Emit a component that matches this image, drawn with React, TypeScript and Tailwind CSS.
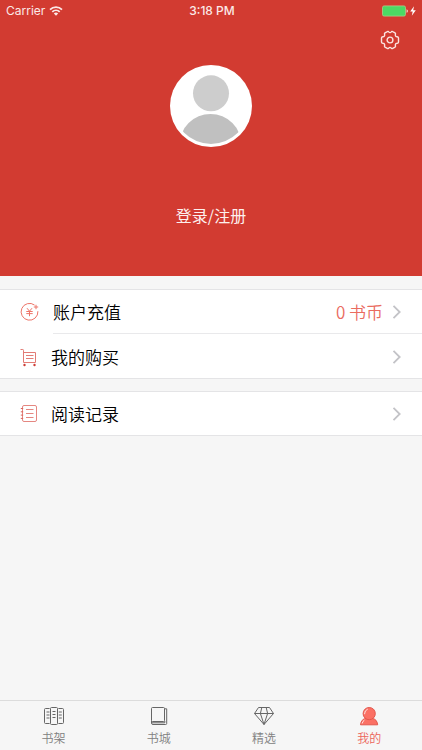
import React from "react";

const cjk = "font-['Noto_Sans_CJK_SC',sans-serif]";

function StatusBar() {
  return (
    <div className="grid h-[22px] grid-cols-3 items-center pl-[6px] pr-1 font-['Inter',sans-serif] text-[12px] leading-[22px] text-[#fbe9e7]">
      <div className="flex items-center gap-1">
        <span>Carrier</span>
        <svg width="14" height="10" viewBox="0 0 14 10" fill="none" stroke="currentColor" strokeWidth="1.8" aria-hidden="true">
          <path d="M1 3.6a8.6 8.6 0 0 1 12 0" />
          <path d="M3.3 5.9a5.3 5.3 0 0 1 7.4 0" />
          <path d="M7 9.8 4.8 7.5a3.2 3.2 0 0 1 4.4 0z" fill="currentColor" stroke="none" />
        </svg>
      </div>
      <span className="text-center font-medium">3:18 PM</span>
      <svg className="justify-self-end" width="36" height="12" viewBox="0 0 36 12" aria-hidden="true">
        <rect x="0.5" y="0.9" width="23" height="10.2" rx="1.6" fill="#4cd964" stroke="#a9cf8c" strokeWidth="0.8" />
        <path d="M24.6 4.2c1.6.4 1.6 3.2 0 3.6z" fill="#fbe9e7" />
        <path d="M32 1.2 28.2 6.6h2.5l-.9 4.2 4-5.6h-2.6z" fill="#fff" />
      </svg>
    </div>
  );
}

function GearIcon() {
  return (
    <svg width="20" height="20" viewBox="0 0 20 20" fill="none" stroke="#fbe4e1" strokeWidth="1.4" strokeLinejoin="round" aria-hidden="true">
      <path d="M7.3 1.6Q8.2 1 8.7 1.9Q10 3.4 11.3 1.9Q11.8 1 12.7 1.6L15 2.9Q15.8 3.5 15.4 4.4Q15 6.7 17.2 6.8Q18.3 6.9 18.5 7.9V12.1Q18.3 13.1 17.2 13.2Q15 13.3 15.4 15.6Q15.8 16.5 15 17.1L12.7 18.4Q11.8 19 11.3 18.1Q10 16.6 8.7 18.1Q8.2 19 7.3 18.4L5 17.1Q4.2 16.5 4.6 15.6Q5 13.3 2.8 13.2Q1.7 13.1 1.5 12.1V7.9Q1.7 6.9 2.8 6.8Q5 6.7 4.6 4.4Q4.2 3.5 5 2.9Z" />
      <circle cx="10" cy="10" r="2.9" />
    </svg>
  );
}

function Avatar() {
  return (
    <svg width="82" height="82" viewBox="0 0 82 82" aria-hidden="true">
      <defs>
        <clipPath id="avatar-inner">
          <circle cx="41" cy="41" r="38" />
        </clipPath>
      </defs>
      <circle cx="41" cy="41" r="41" fill="#fff" />
      <circle cx="41" cy="28.3" r="18" fill="#cdcdcd" />
      <circle cx="40.5" cy="80" r="31" fill="#c0c0c0" clipPath="url(#avatar-inner)" />
    </svg>
  );
}

function RechargeIcon() {
  return (
    <svg width="20" height="20" viewBox="0 0 20 20" fill="none" stroke="#ed7468" strokeWidth="1" aria-hidden="true">
      <path d="M14.6 3.1A8.4 8.4 0 1 0 17.9 9.2" />
      <path d="M16 2.8v4.4M13.8 5h4.4" />
      <path d="M7 6.2 9.5 9.2 12 6.2M6.3 9.5h6.4M6.3 11.6h6.4M9.5 9.2v5" />
    </svg>
  );
}

function CartIcon() {
  return (
    <svg width="20" height="20" viewBox="0 0 20 20" fill="none" stroke="#e27b75" strokeWidth="1" aria-hidden="true">
      <path d="M.5 2.5h2.3q.7 0 .7.8v12.2h12V5.5h-12" />
      <path d="M6 8.5h7.5M6 11.5h7.5" />
      <circle cx="4.5" cy="18" r="1.2" fill="#cf3c35" stroke="none" />
      <circle cx="14.5" cy="18" r="1.2" fill="#cf3c35" stroke="none" />
    </svg>
  );
}

function RecordIcon() {
  return (
    <svg width="20" height="20" viewBox="0 0 20 20" fill="none" stroke="#e58781" strokeWidth="1" aria-hidden="true">
      <rect x="2.5" y="1.5" width="14" height="16" rx="1.5" />
      <path d="M6 5.5h7.5M6 9.5h7.5M6 13.5h7.5" />
      <path d="M.8 4.5h2.4M.8 7.8h2.4M.8 11.1h2.4M.8 14.4h2.4" stroke="#d9635c" />
    </svg>
  );
}

function Chevron() {
  return (
    <svg width="10" height="16" viewBox="0 0 10 16" fill="none" stroke="#c3c3c7" strokeWidth="1.8" aria-hidden="true">
      <path d="m1.5 1.8 6.2 6.2-6.2 6.2" />
    </svg>
  );
}

function Row({ icon, label, value, wide }: { icon: React.ReactNode; label: string; value?: string; wide?: boolean }) {
  return (
    <button type="button" className="flex h-[43px] w-full items-center px-5 text-left font-[350]">
      {icon}
      <span className={`${wide ? "ml-[13px]" : "ml-[11px]"} text-[17px] leading-6 text-black`}>{label}</span>
      <span className="ml-auto mr-[9px] text-[17px] leading-6 text-[#ea6c5f]">{value}</span>
      <Chevron />
    </button>
  );
}

function ShelfIcon() {
  return (
    <svg width="20" height="20" viewBox="0 0 20 20" fill="none" stroke="#666" strokeWidth="1" aria-hidden="true">
      <path d="M5.6 2.5h-4Q.5 2.5.5 3.5v13q0 1 1 1h4.1" />
      <rect x="6.5" y="1.5" width="7" height="17" rx="1" />
      <path d="M14.4 2.5h4q1.1 0 1.1 1v13q0 1-1 1h-4.1" />
      <path d="M2.5 6h3M2.5 9h3M2.5 12h3M8.5 5.5h3M8.5 8.5h3M8.5 11.5h3M14.8 6h3M14.8 9h3M14.8 12h3" />
    </svg>
  );
}

function StoreIcon() {
  return (
    <svg width="20" height="20" viewBox="0 0 20 20" fill="none" stroke="#666" strokeWidth="1" aria-hidden="true">
      <rect x="2.5" y="1.5" width="13" height="14" rx="1" />
      <path d="M15.5 2.8h2.2v14.7q0 1-1 1H4q-1.5 0-1.5-1.5v-2.2" />
      <path d="M3 16.8h12.8V15" />
    </svg>
  );
}

function DiamondIcon() {
  return (
    <svg width="20" height="20" viewBox="0 0 20 20" fill="none" stroke="#666" strokeWidth="1" strokeLinejoin="round" aria-hidden="true">
      <path d="M4.5 1.5h11l4 6L10 18.5.5 7.5zM.5 7.5h19" />
      <path d="M7.8 1.5 6.4 7.5 10 18.5l3.6-11-1.4-6" />
    </svg>
  );
}

function PersonIcon() {
  return (
    <svg width="20" height="20" viewBox="0 0 20 20" fill="#fb7064" stroke="#e3574c" strokeWidth="1" aria-hidden="true">
      <path d="M1.5 18.8Q2.3 12.9 7 12.4h6.2q4.7.5 5.5 6.4z" />
      <circle cx="10.2" cy="7.6" r="6.1" />
      <path d="M5.5 8.2Q5.5 4.4 8.8 3M3.1 17.5q.6-2.5 2.4-3.5" stroke="#fff" strokeWidth="0.8" fill="none" />
    </svg>
  );
}

const tabs = [
  { label: "书架", icon: <ShelfIcon />, active: false },
  { label: "书城", icon: <StoreIcon />, active: false },
  { label: "精选", icon: <DiamondIcon />, active: false },
  { label: "我的", icon: <PersonIcon />, active: true },
];

export default function App() {
  return (
    <div className={`flex min-h-screen flex-col bg-[#f6f6f6] ${cjk}`}>
      <header className="bg-[#d23b31] pb-[49px]">
        <StatusBar />
        <div className="flex justify-end pr-[22px] pt-2">
          <button type="button" aria-label="设置">
            <GearIcon />
          </button>
        </div>
        <div className="flex flex-col items-center pt-[15px]">
          <Avatar />
          <button type="button" className="mt-14 text-[16px] leading-6 text-[#fdf0ee]">
            登录/注册
          </button>
        </div>
      </header>

      <main className="flex flex-1 flex-col gap-3 pt-[13px]">
        <section className="border-y border-[#e4e4e6] bg-white">
          <Row icon={<RechargeIcon />} label="账户充值" value="0 书币" wide />
          <div className="ml-[53px] h-px bg-[#e9e9eb]" />
          <div className="pt-px">
            <Row icon={<CartIcon />} label="我的购买" />
          </div>
        </section>
        <section className="border-y border-[#e4e4e6] bg-white">
          <Row icon={<RecordIcon />} label="阅读记录" />
        </section>
      </main>

      <nav className="grid grid-cols-4 border-t border-[#dcdcdc] bg-[#f6f6f6] pb-[3px] pl-px pt-[5px]">
        {tabs.map((t) => (
          <button
            key={t.label}
            type="button"
            className={`flex flex-col items-center gap-[3px] text-[12px] font-[350] leading-[18px] ${t.active ? "text-[#ec6459]" : "text-[#808080]"}`}
          >
            {t.icon}
            <span>{t.label}</span>
          </button>
        ))}
      </nav>
    </div>
  );
}
